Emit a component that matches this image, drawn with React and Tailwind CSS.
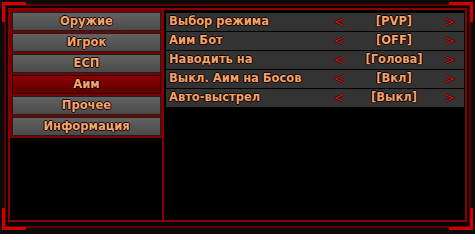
const TABS = ["Оружие", "Игрок", "ЕСП", "Аим", "Прочее", "Информация"];

const OPTIONS = [
  { label: "Выбор режима", value: "[PVP]" },
  { label: "Аим Бот", value: "[OFF]" },
  { label: "Наводить на", value: "[Голова]" },
  { label: "Выкл. Аим на Босов", value: "[Вкл]" },
  { label: "Авто-выстрел", value: "[Выкл]" },
];

const outline =
  "[text-shadow:1px_0_0_#140000,-1px_0_0_#140000,0_1px_0_#140000,0_-1px_0_#140000]";

function Chevron({ dir }) {
  const pts = dir === "left" ? "10,1.5 1.5,5 10,8.5" : "1,1.5 9.5,5 1,8.5";
  return (
    <svg width="11" height="10" viewBox="0 0 11 10">
      <polyline points={pts} fill="none" stroke="#3a0000" strokeWidth="2.4" />
      <polyline points={pts} fill="none" stroke="#c41c1c" strokeWidth="1.1" />
    </svg>
  );
}

export default function App() {
  return (
    <div
      className="w-[475px] h-[234px] bg-[#0b0b0b] pt-[2px] px-[2px] pb-[4px]"
      style={{ fontFamily: '"DejaVu Sans", sans-serif' }}
    >
      <div className="relative h-full p-[2px]">
        {/* corner accents */}
        <div className="absolute left-0 top-0 w-[24px] h-[20px] border-t-[3px] border-l-[3px] border-[#d00000]" />
        <div className="absolute right-0 top-0 w-[24px] h-[20px] border-t-[3px] border-r-[3px] border-[#d00000]" />
        <div className="absolute left-0 bottom-0 w-[24px] h-[22px] border-b-[3px] border-l-[3px] border-[#d00000]" />
        <div className="absolute right-0 bottom-0 w-[24px] h-[22px] border-b-[3px] border-r-[3px] border-[#d00000]" />

        {/* outer frame line */}
        <div className="h-full border-2 border-[#5e0000] bg-[#050505] pt-[2px] px-[2px] pb-[4px]">
          {/* inner frame */}
          <div className="h-full flex border-2 border-[#8a0000] bg-black">
            {/* left tabs */}
            <div className="w-[154px] border-r-2 border-[#8a0000] flex flex-col">
              <div className="bg-[#7a0000] pt-[2px] pb-[2px] pl-[2px] pr-[1px] flex flex-col gap-[2px]">
                {TABS.map((t) => (
                  <div
                    key={t}
                    className={
                      t === "Аим"
                        ? "h-[19px] border border-[#2a0000] bg-gradient-to-b from-[#8e0000] to-[#5c0000] flex items-center justify-center"
                        : "h-[19px] border border-[#1e1e1e] bg-gradient-to-b from-[#626262] to-[#4a4a4a] flex items-center justify-center"
                    }
                  >
                    <span
                      className={`text-[11.5px] font-bold leading-none text-[#f2a86c] ${outline}`}
                    >
                      {t}
                    </span>
                  </div>
                ))}
              </div>
              <div className="flex-1 bg-black" />
            </div>

            {/* right options */}
            <div className="flex-1 pt-[3px] pl-[2px] pr-[1px] flex flex-col gap-px">
              {OPTIONS.map((o) => (
                <div
                  key={o.label}
                  className="h-[18px] bg-[#333333] flex items-center pl-[3px] pr-[9px]"
                >
                  <span
                    className={`flex-1 text-[11.5px] font-bold leading-none text-[#f0a468] ${outline}`}
                  >
                    {o.label}
                  </span>
                  <div className="w-[122px] flex items-center">
                    <div className="w-[12px] flex justify-center">
                      <Chevron dir="left" />
                    </div>
                    <span
                      className={`flex-1 text-center text-[11.5px] font-bold leading-none text-[#f0a468] ${outline}`}
                    >
                      {o.value}
                    </span>
                    <div className="w-[12px] flex justify-center">
                      <Chevron dir="right" />
                    </div>
                  </div>
                </div>
              ))}
            </div>
          </div>
        </div>
      </div>
    </div>
  );
}
